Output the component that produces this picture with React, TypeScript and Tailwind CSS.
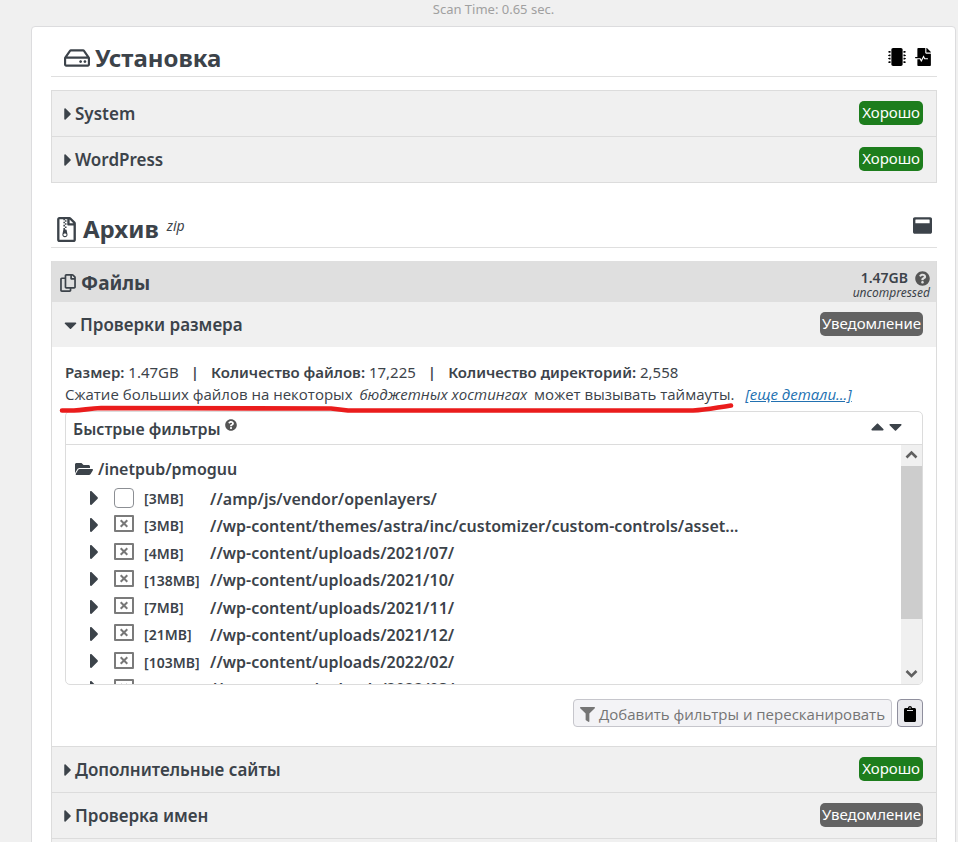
import React from "react";
import {
  FaCaretDown,
  FaCaretRight,
  FaCaretUp,
  FaClipboard,
  FaFileMedicalAlt,
  FaFilter,
  FaFolderOpen,
  FaMicrochip,
  FaQuestionCircle,
  FaRegCopy,
  FaRegFileArchive,
  FaRegHdd,
  FaWindowMaximize,
} from "react-icons/fa";

type Status = "good" | "notice";

const folders = [
  { size: "3MB", path: "//amp/js/vendor/openlayers/", filtered: false },
  { size: "3MB", path: "//wp-content/themes/astra/inc/customizer/custom-controls/asset...", filtered: true },
  { size: "4MB", path: "//wp-content/uploads/2021/07/", filtered: true },
  { size: "138MB", path: "//wp-content/uploads/2021/10/", filtered: true },
  { size: "7MB", path: "//wp-content/uploads/2021/11/", filtered: true },
  { size: "21MB", path: "//wp-content/uploads/2021/12/", filtered: true },
  { size: "103MB", path: "//wp-content/uploads/2022/02/", filtered: true },
  { size: "96MB", path: "//wp-content/uploads/2022/03/", filtered: true },
];

function Badge({ status }: { status: Status }) {
  return status === "good" ? (
    <span className="h-6 rounded-[5px] bg-[#1d7d1d] px-[3px] text-[15px] leading-[22px] text-white">Хорошо</span>
  ) : (
    <span className="h-6 rounded-[5px] bg-[#636363] px-[2px] text-[15px] leading-[22px] text-white">Уведомление</span>
  );
}

function CheckRow({ title, status, open = false }: { title: string; status: Status; open?: boolean }) {
  return (
    <h3>
      <button type="button" aria-expanded={open} className="flex h-[45px] w-full items-center bg-[#f0f0f0] pr-[13px] pl-3 text-left">
        {open ? <FaCaretDown className="mr-[3px] h-5 w-[13px]" /> : <FaCaretRight className="mr-[3px] h-5 w-2" />}
        <span className="text-[17px] font-semibold">{title}</span>
        <span className="mb-[2px] ml-auto flex">
          <Badge status={status} />
        </span>
      </button>
    </h3>
  );
}

function FolderRow({ size, path, filtered }: { size: string; path: string; filtered: boolean }) {
  return (
    <li className="flex items-center">
      <button type="button" aria-label={"Раскрыть " + path} className="mr-[15px] ml-6 flex shrink-0">
        <FaCaretRight className="h-6 w-[9px]" />
      </button>
      <label className="flex items-center">
        {filtered ? (
          <span className="relative mb-[2px] flex h-[17px] w-5 shrink-0">
            <input type="checkbox" disabled className="h-[17px] w-5 appearance-none rounded-[1px] border-2 border-[#7b7b7b] bg-white" />
            <svg viewBox="0 0 20 17" className="pointer-events-none absolute inset-0 h-[17px] w-5" fill="none" stroke="#777" strokeWidth="2">
              <path d="M6.700 5.200l6.600 6.600M13.300 5.200l-6.600 6.600" />
            </svg>
          </span>
        ) : (
          <input type="checkbox" className="size-5 shrink-0 appearance-none rounded border border-[#8c8f94] bg-white" />
        )}
        <span className="ml-[10px] w-[66px] pt-[2px] text-[14px] font-semibold">[{size}]</span>
        <span className="pt-[2px] text-[16px] font-semibold whitespace-nowrap">{path}</span>
      </label>
    </li>
  );
}

function QuickFilters() {
  return (
    <section className="mt-[6px] h-[274px] overflow-hidden rounded-[5px] border border-[#dcdcdc] bg-white">
      <header className="flex h-[33px] items-center border-b border-[#dcdcdc] pr-4 pl-[7px]">
        <h4 className="flex items-center pt-[2px] text-[16px] font-semibold">
          Быстрые фильтры
          <FaQuestionCircle className="mb-2 ml-1 size-3 text-[#555]" />
        </h4>
        <button type="button" aria-label="Свернуть все" className="mb-1 ml-auto">
          <FaCaretUp className="size-[21px]" />
        </button>
        <button type="button" aria-label="Развернуть все" className="mb-1 -ml-[3px]">
          <FaCaretDown className="size-[21px]" />
        </button>
      </header>
      <div className="flex h-[239px]">
        <div className="min-w-0 flex-1 overflow-hidden pt-[9px]">
          <p className="flex h-[30px] items-center gap-[5px] pl-[9px] text-[16px] font-semibold">
            <FaFolderOpen className="size-[18px]" />
            /inetpub/pmoguu
          </p>
          <ul className="grid h-[218px] grid-rows-8">
            {folders.map((f) => (
              <FolderRow key={f.path} {...f} />
            ))}
          </ul>
        </div>
        <div className="flex w-[21px] flex-col items-center bg-[#f0f0f0]" aria-hidden="true">
          <svg viewBox="0 0 21 21" className="size-[21px]" fill="none" stroke="#606060" strokeWidth="2.6">
            <path d="M5.500 12.500l5-5 5 5" />
          </svg>
          <div className="h-[153px] w-full bg-[#cdcdcd]" />
          <svg viewBox="0 0 21 21" className="mt-auto size-[21px]" fill="none" stroke="#606060" strokeWidth="2.6">
            <path d="M5.500 8l5 5 5-5" />
          </svg>
        </div>
      </div>
    </section>
  );
}

export default function App() {
  return (
    <main className="h-screen overflow-hidden bg-[#f0f0f0] font-['Noto_Sans',sans-serif] text-[#3c434a]">
      <p className="h-[26px] pl-[29px] text-center text-[13px] leading-[18px] text-[#a0a0a0]">Scan Time: 0.65 sec.</p>
      <div className="mr-[2px] ml-[31px] h-[900px] rounded border border-[#dcdcde] bg-white pr-[18px] pl-[19px]">
        <header className="flex h-[50px] items-center border-b border-[#dfdfdf] pt-3 pr-[5px] pl-[13px]">
          <FaRegHdd className="size-[26px]" />
          <h2 className="ml-[5px] text-[24px] font-bold">Установка</h2>
          <button type="button" aria-label="Сервер" className="mb-[2px] ml-auto text-black">
            <FaMicrochip className="size-[18px]" />
          </button>
          <button type="button" aria-label="Журнал" className="mb-[2px] ml-2 text-black">
            <FaFileMedicalAlt className="size-[18px]" />
          </button>
        </header>
        <div className="mt-[13px] divide-y divide-[#dcdcdc] border border-[#dcdcdc]">
          <CheckRow title="System" status="good" />
          <CheckRow title="WordPress" status="good" />
        </div>

        <header className="mt-[15px] flex h-[50px] items-center border-b border-[#dfdfdf] pt-[13px] pr-[5px] pl-[3px]">
          <FaRegFileArchive className="size-[25px]" />
          <h2 className="ml-1 text-[24px] font-bold">Архив</h2>
          <i className="mb-2 ml-2 text-[14px]">zip</i>
          <button type="button" aria-label="Окно" className="mb-2 ml-auto">
            <FaWindowMaximize className="size-[19px]" />
          </button>
        </header>
        <div className="mt-[13px] divide-y divide-[#dcdcdc] border border-t-0 border-[#dcdcdc]">
          <section>
            <header className="flex h-[41px] items-center bg-[#dfdfdf] pt-[3px] pr-[6px] pl-[7px]">
              <FaRegCopy className="size-[18px]" />
              <h3 className="ml-1 text-[19px] font-bold">Файлы</h3>
              <div className="ml-auto pt-1 text-right">
                <p className="flex items-center justify-end gap-[7px] text-[14px] leading-[14px] font-semibold">
                  1.47GB <FaQuestionCircle className="size-[15px] text-[#555]" />
                </p>
                <p className="text-[12px] leading-[14px] italic">uncompressed</p>
              </div>
            </header>
            <CheckRow title="Проверки размера" status="notice" open />
            <div className="px-[13px] pt-[14px] pb-[19px]">
              <div className="relative text-[15px] leading-[22px] whitespace-nowrap">
                <p className="flex">
                  <b className="font-semibold">Размер:</b>&nbsp;1.47GB
                  <b className="mx-3 font-semibold">|</b>
                  <b className="font-semibold">Количество файлов:</b>&nbsp;17,225
                  <b className="mx-3 font-semibold">|</b>
                  <b className="font-semibold">Количество директорий:</b>&nbsp;2,558
                </p>
                <p className="font-['Open_Sans',sans-serif]">
                  Сжатие больших файлов на некоторых <i className="mx-[3px]">бюджетных хостингах</i> может вызывать таймауты. &nbsp;
                  <a href="#details" className="ml-[3px] text-[#2271b1] italic underline">[еще детали...]</a>
                </p>
                <svg viewBox="0 0 680 14" className="pointer-events-none absolute top-[40px] -left-[6px] h-[14px] w-[680px]" fill="none" stroke="#ea1c1c" strokeWidth="4.6" strokeLinecap="round" strokeLinejoin="round">
                  <path d="M3 9.500L15 9.500C25 9 30 7.500 42 7L272 7.500L289 9.500L634 9.500C647 9 655 7 672 4.500" />
                </svg>
              </div>
              <QuickFilters />
              <div className="mt-[14px] flex justify-end gap-[5px]">
                <button type="button" className="flex h-7 items-center gap-1 rounded border border-[#c6c6cc] bg-[#f3f3f6] px-[6px] pt-[2px] font-['Open_Sans',sans-serif] text-[15px] text-[#757575]">
                  <FaFilter className="size-[15px]" />
                  Добавить фильтры и пересканировать
                </button>
                <button type="button" aria-label="Буфер обмена" className="flex h-7 w-[26px] items-center justify-center rounded border border-[#8f8f9d] bg-[#e9e9ed] pt-px text-black">
                  <FaClipboard className="size-4" />
                </button>
              </div>
            </div>
          </section>
          <CheckRow title="Дополнительные сайты" status="good" />
          <CheckRow title="Проверка имен" status="notice" />
          <CheckRow title="База данных" status="good" />
        </div>
      </div>
    </main>
  );
}
